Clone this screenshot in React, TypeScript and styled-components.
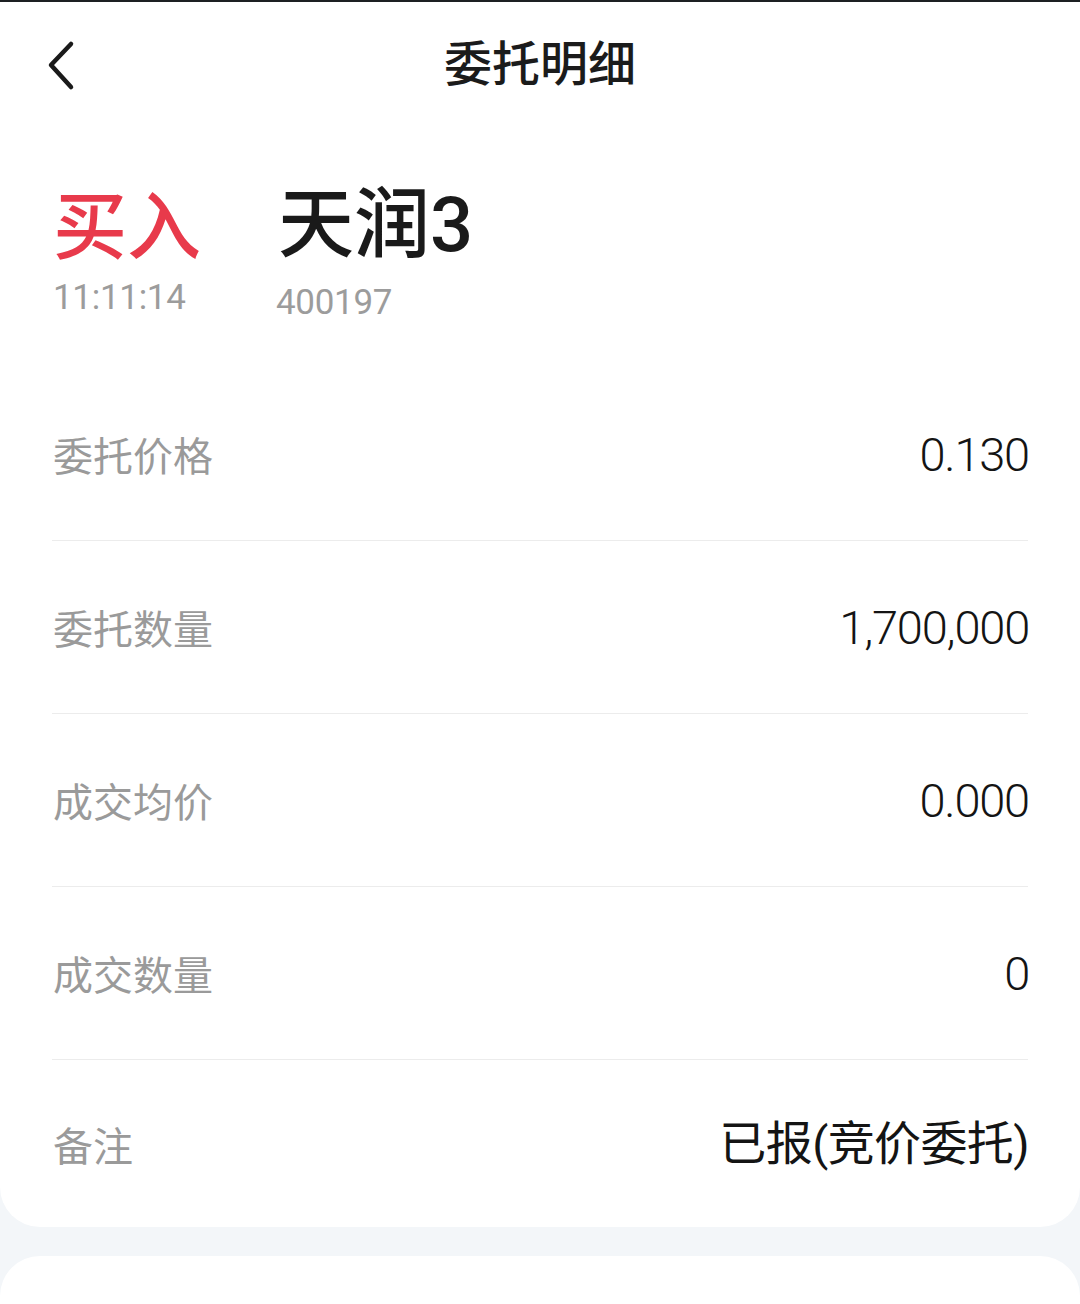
import React from "react";
import styled, { createGlobalStyle } from "styled-components";

const GlobalStyle = createGlobalStyle`
  html, body {
    margin: 0;
    padding: 0;
    background: #f3f6f9;
    font-family: "Noto Sans CJK SC", "Noto Sans", sans-serif;
  }
  * { box-sizing: border-box; }
`;

const Page = styled.div`
  width: 1080px;
  height: 1304px;
  overflow: hidden;
  background: #f3f6f9;
  display: flex;
  flex-direction: column;
`;

const TopEdge = styled.div`
  height: 2px;
  flex-shrink: 0;
  background: #1d2023;
`;

const MainCard = styled.div`
  background: #ffffff;
  border-radius: 0 0 40px 40px;
`;

const NextCard = styled.div`
  background: #ffffff;
  margin-top: 29px;
  border-radius: 40px 40px 0 0;
  height: 200px;
  flex-shrink: 0;
`;

const Header = styled.header`
  height: 116px;
  display: grid;
  grid-template-columns: 1fr auto 1fr;
  align-items: center;
`;

const BackButton = styled.button`
  justify-self: start;
  margin-left: 38px;
  margin-top: 8px;
  padding: 0;
  border: none;
  background: transparent;
  display: flex;
  width: 44px;
  height: 60px;
  align-items: center;
  justify-content: center;
  cursor: pointer;
`;

const Title = styled.h1`
  margin: 0;
  font-family: "Noto Sans CJK SC", sans-serif;
  font-size: 48px;
  font-weight: 500;
  line-height: 1;
  color: #1b1b1b;
`;

const StockBlock = styled.section`
  display: flex;
  align-items: flex-start;
  padding: 66px 0 48px 53px;
`;

const Column = styled.div<{ $width?: number }>`
  display: flex;
  flex-direction: column;
  width: ${(p) => (p.$width ? `${p.$width}px` : "auto")};
`;

const Side = styled.div`
  font-family: "Noto Sans CJK SC", sans-serif;
  font-size: 74px;
  font-weight: 500;
  line-height: 1;
  color: #e83a4b;
`;

const Name = styled.div`
  font-family: "Noto Sans CJK SC", sans-serif;
  font-size: 76px;
  font-weight: 500;
  line-height: 1;
  color: #1a1a1a;
  margin-top: -4px;
  span {
    font-family: "Roboto", sans-serif;
    font-weight: 500;
  }
`;

const Sub = styled.div<{ $gap: number; $shift?: number }>`
  font-family: "Roboto", "Noto Sans", sans-serif;
  font-size: 35px;
  line-height: 1;
  color: #9c9c9c;
  margin-top: ${(p) => p.$gap}px;
  margin-left: ${(p) => p.$shift ?? 0}px;
  letter-spacing: -0.3px;
`;

const List = styled.div`
  display: flex;
  flex-direction: column;
  padding: 0 52px;
`;

const Row = styled.div`
  height: 173px;
  display: flex;
  align-items: center;
  justify-content: space-between;
  border-bottom: 1.5px solid #ececec;
  &:last-child {
    border-bottom: none;
    height: 167px;
  }
`;

const Label = styled.span`
  font-family: "Noto Sans CJK SC", sans-serif;
  font-size: 40px;
  line-height: 1;
  color: #9a9a9a;
  margin-left: 1px;
`;

const Value = styled.span<{ $text?: boolean }>`
  font-family: "Roboto", "Noto Sans CJK SC", sans-serif;
  font-size: 47px;
  font-weight: ${(p) => (p.$text ? 400 : 300)};
  line-height: 1;
  color: #141414;
  letter-spacing: ${(p) => (p.$text ? -0.6 : -1.2)}px;
  margin-right: -1px;
`;

const rows: { label: string; value: string; text?: boolean }[] = [
  { label: "委托价格", value: "0.130" },
  { label: "委托数量", value: "1,700,000" },
  { label: "成交均价", value: "0.000" },
  { label: "成交数量", value: "0" },
  { label: "备注", value: "已报(竞价委托)", text: true },
];

export default function App() {
  return (
    <>
      <GlobalStyle />
      <Page>
        <TopEdge />
        <MainCard>
          <Header>
            <BackButton aria-label="返回">
              <svg width="40" height="56" viewBox="0 0 40 56" fill="none">
                <path
                  d="M31 8 L11 29 L31 51"
                  stroke="#1a1a1a"
                  strokeWidth="4.5"
                  strokeLinecap="round"
                  strokeLinejoin="round"
                />
              </svg>
            </BackButton>
            <Title>委托明细</Title>
            <div />
          </Header>
          <StockBlock>
            <Column $width={225}>
              <Side>买入</Side>
              <Sub $gap={22}>11:11:14</Sub>
            </Column>
            <Column>
              <Name>
                天润<span>3</span>
              </Name>
              <Sub $gap={22} $shift={-2}>400197</Sub>
            </Column>
          </StockBlock>
          <List>
            {rows.map((r) => (
              <Row key={r.label}>
                <Label>{r.label}</Label>
                <Value $text={r.text}>{r.value}</Value>
              </Row>
            ))}
          </List>
        </MainCard>
        <NextCard />
      </Page>
    </>
  );
}
